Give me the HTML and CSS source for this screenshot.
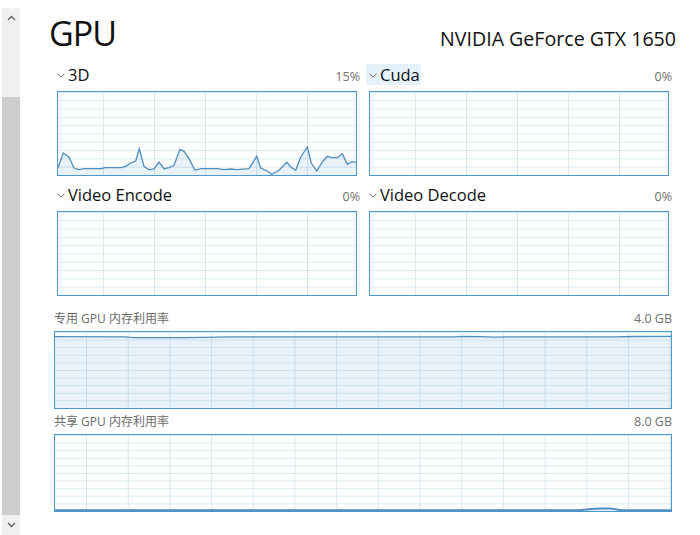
FILE: index.html
```html
<!DOCTYPE html>
<html lang="zh-CN">
<head>
<meta charset="utf-8">
<title>GPU</title>
<link rel="stylesheet" href="styles.css">
</head>
<body>
<div class="app">
  <div class="scrollbar">
    <div class="sb-btn sb-up"><svg width="9" height="6" viewBox="0 0 9 6"><polyline points="1,5 4.5,1.5 8,5" fill="none" stroke="#606060" stroke-width="1.4"/></svg></div>
    <div class="sb-thumb"></div>
    <div class="sb-btn sb-down"><svg width="9" height="6" viewBox="0 0 9 6"><polyline points="1,1 4.5,4.5 8,1" fill="none" stroke="#606060" stroke-width="1.4"/></svg></div>
  </div>
  <main class="content">
    <header class="head">
      <h1 class="title">GPU</h1>
      <div class="model">NVIDIA GeForce GTX 1650</div>
    </header>

    <section class="engines">
      <div class="engine">
        <div class="eng-head">
          <span class="eng-name"><svg class="chev" width="8" height="5" viewBox="0 0 8 5"><polyline points="0.5,0.7 4,4.2 7.5,0.7" fill="none" stroke="#6a6a6a" stroke-width="1"/></svg>3D</span>
          <span class="pct">15%</span>
        </div>
        <div class="chart grid-eng">
          <svg class="plot" viewBox="0 0 298 83" preserveAspectRatio="none">
            <path class="area" d="M0,75.7 L5.3,61 L11,65 L16,76 L21,77.7 L26,76.7 L42.7,76.7 L47.7,75.7 L62.7,75.7 L67.7,74.3 L72.7,71 L77.7,69 L81.3,56.7 L86,74.3 L91,77.7 L96,77 L101,70 L106,76.7 L111,75.7 L116,73.3 L122,57.3 L126,59.3 L131,66.7 L137,78.3 L142.7,76.7 L159.3,76.7 L166,77.7 L172.7,77 L179.3,77.7 L191,76.7 L198.7,64.3 L202.7,76 L209.3,79 L213.7,82.3 L221,78.3 L228.7,70.3 L232.7,75 L237.7,78.3 L242.7,65 L249.3,55 L253.3,71 L258.7,79 L264.3,70 L269.3,64.3 L274.3,65.7 L279.3,65.7 L284.3,61.7 L289.3,72.3 L294.3,69.7 L298,70.3 L298,83 L0,83 Z"/>
            <polyline class="line" points="0,75.7 5.3,61 11,65 16,76 21,77.7 26,76.7 42.7,76.7 47.7,75.7 62.7,75.7 67.7,74.3 72.7,71 77.7,69 81.3,56.7 86,74.3 91,77.7 96,77 101,70 106,76.7 111,75.7 116,73.3 122,57.3 126,59.3 131,66.7 137,78.3 142.7,76.7 159.3,76.7 166,77.7 172.7,77 179.3,77.7 191,76.7 198.7,64.3 202.7,76 209.3,79 213.7,82.3 221,78.3 228.7,70.3 232.7,75 237.7,78.3 242.7,65 249.3,55 253.3,71 258.7,79 264.3,70 269.3,64.3 274.3,65.7 279.3,65.7 284.3,61.7 289.3,72.3 294.3,69.7 298,70.3"/>
          </svg>
        </div>
      </div>

      <div class="engine">
        <div class="eng-head">
          <span class="eng-name is-selected"><svg class="chev" width="8" height="5" viewBox="0 0 8 5"><polyline points="0.5,0.7 4,4.2 7.5,0.7" fill="none" stroke="#6a6a6a" stroke-width="1"/></svg>Cuda</span>
          <span class="pct">0%</span>
        </div>
        <div class="chart grid-eng"></div>
      </div>

      <div class="engine">
        <div class="eng-head">
          <span class="eng-name"><svg class="chev" width="8" height="5" viewBox="0 0 8 5"><polyline points="0.5,0.7 4,4.2 7.5,0.7" fill="none" stroke="#6a6a6a" stroke-width="1"/></svg>Video Encode</span>
          <span class="pct">0%</span>
        </div>
        <div class="chart grid-eng"></div>
      </div>

      <div class="engine">
        <div class="eng-head">
          <span class="eng-name"><svg class="chev" width="8" height="5" viewBox="0 0 8 5"><polyline points="0.5,0.7 4,4.2 7.5,0.7" fill="none" stroke="#6a6a6a" stroke-width="1"/></svg>Video Decode</span>
          <span class="pct">0%</span>
        </div>
        <div class="chart grid-eng"></div>
      </div>
    </section>

    <section class="memory">
      <div class="mem">
        <div class="mem-head">
          <span class="mem-name">专用 GPU 内存利用率</span>
          <span class="mem-val">4.0 GB</span>
        </div>
        <div class="chart grid-mem">
          <svg class="plot" viewBox="0 0 616 76" preserveAspectRatio="none">
            <path class="area" d="M0,4.6 L70,4.8 L78,5.6 L130,5.6 L178,4.9 L400,4.9 L408,4.3 L425,4.6 L440,5.1 L470,4.8 L560,4.9 L580,4.5 L616,4.3 L616,76 L0,76 Z"/>
            <polyline class="line" points="0,4.6 70,4.8 78,5.6 130,5.6 178,4.9 400,4.9 408,4.3 425,4.6 440,5.1 470,4.8 560,4.9 580,4.5 616,4.3"/>
          </svg>
        </div>
      </div>
      <div class="mem">
        <div class="mem-head">
          <span class="mem-name">共享 GPU 内存利用率</span>
          <span class="mem-val">8.0 GB</span>
        </div>
        <div class="chart grid-mem">
          <svg class="plot" viewBox="0 0 616 76" preserveAspectRatio="none">
            <path class="area" d="M0,75.2 L524,75.2 L536,74 L546,73.4 L556,73.6 L566,75.2 L616,75.2 L616,76 L0,76 Z"/>
            <polyline class="line thick" points="0,75.2 524,75.2 536,74 546,73.4 556,73.6 566,75.2 616,75.2"/>
          </svg>
        </div>
      </div>
    </section>
  </main>
</div>
</body>
</html>
```

FILE: styles.css
```css
* { box-sizing: border-box; }

html, body {
  margin: 0;
  padding: 0;
  background: #ffffff;
}

body {
  width: 700px;
  height: 535px;
  overflow: hidden;
  font-family: "Open Sans", "Noto Sans CJK SC", sans-serif;
  color: #000;
}

.app {
  display: flex;
  align-items: flex-start;
  height: 535px;
}

/* ---------- scrollbar ---------- */
.scrollbar {
  margin: 8px 0 0 2px;
  width: 18px;
  height: 527px;
  background: #f0f0f0;
  display: flex;
  flex-direction: column;
}

.sb-btn {
  height: 20px;
  display: flex;
  align-items: center;
  justify-content: center;
}

.sb-up {
  height: 89px;
  align-items: flex-start;
  padding-top: 7px;
}

.sb-thumb {
  height: 418px;
  background: #cdcdcd;
}

.sb-down {
  height: 20px;
}

/* ---------- content ---------- */
.content {
  margin-left: 34px;
  width: 618px;
}

.head {
  display: flex;
  align-items: baseline;
  justify-content: space-between;
  height: 64px;
  padding-top: 15px;
  margin-right: -4px;
}

.title {
  margin: 0 0 0 -5px;
  font-size: 34px;
  line-height: 36px;
  letter-spacing: -1px;
  font-weight: 400;
  color: #111;
}

.model {
  font-size: 19.6px;
  line-height: 24px;
  color: #111;
}

/* ---------- engines ---------- */
.engines {
  display: grid;
  grid-template-columns: 306px 306px;
  column-gap: 6px;
  row-gap: 8px;
}

.engine {
  display: flex;
  flex-direction: column;
}

.eng-head {
  display: flex;
  align-items: baseline;
  justify-content: space-between;
  height: 21px;
  margin-bottom: 6px;
}

.eng-name {
  display: inline-flex;
  align-items: baseline;
  height: 21px;
  padding: 0 1px 0 3px;
  font-size: 16.5px;
  line-height: 21px;
  color: #111;
}

.eng-name.is-selected {
  background: #e5f1fb;
}

.chev {
  margin-right: 3px;
  align-self: center;
  margin-top: 1px;
}

.pct {
  font-size: 12.5px;
  color: #707070;
}

.chart {
  border: 1px solid #4a98cc;
  background-color: #fff;
}

.grid-eng {
  margin-left: 3px;
  width: 300px;
  height: 85px;
  background-image:
    linear-gradient(to right, #d9e6f0 1px, transparent 1px),
    linear-gradient(to bottom, #d9eaf4 1px, transparent 1px);
  background-size: 51px 100%, 100% 8.3px;
  background-position: 45px 0, 0 0;
}

.plot {
  display: block;
  width: 100%;
  height: 100%;
}

.plot .area {
  fill: rgba(74, 152, 204, 0.12);
  stroke: none;
}

.plot .line {
  fill: none;
  stroke: #4f8fbf;
  stroke-width: 1.3;
  vector-effect: non-scaling-stroke;
}

.plot .line.thick {
  stroke-width: 2;
}

/* ---------- memory ---------- */
.memory {
  margin-top: 14px;
  display: flex;
  flex-direction: column;
  gap: 4px;
}

.mem-head {
  display: flex;
  align-items: baseline;
  justify-content: space-between;
  height: 17px;
  margin-bottom: 4px;
  line-height: 17px;
}

.mem-name {
  font-size: 12px;
  color: #6b6b6b;
}

.mem-val {
  font-size: 12.5px;
  color: #707070;
}

.grid-mem {
  width: 618px;
  height: 78px;
  background-image:
    linear-gradient(to right, #d9e6f0 1px, transparent 1px),
    linear-gradient(to bottom, #d9eaf4 1px, transparent 1px);
  background-size: 41.7px 100%, 100% 7.6px;
  background-position: 31px 0, 0 0;
}
```
